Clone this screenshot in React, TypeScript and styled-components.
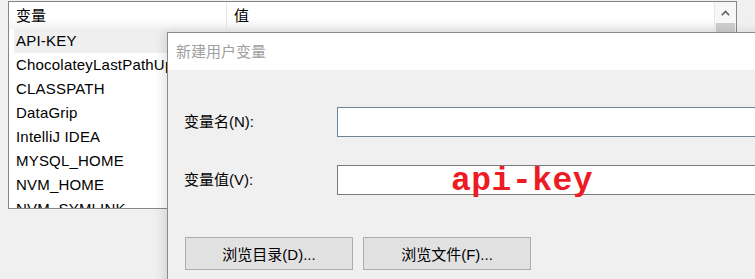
import styled, { createGlobalStyle } from "styled-components";

// Page reset and base font
const GlobalStyle = createGlobalStyle`
  html, body {
    margin: 0;
    padding: 0;
    background: #f0f0f0;
    overflow: hidden;
  }
  body {
    font-family: "Liberation Sans", "Noto Sans CJK SC", sans-serif;
    font-size: 15px;
    color: #000;
  }
`;

const Screen = styled.div`
  position: relative;
  width: 755px;
  height: 279px;
  padding: 1px 0 0 8px;
  box-sizing: border-box;
  overflow: hidden;
  background: #f0f0f0;
`;

// Environment variable list behind the dialog
const ListBox = styled.div`
  display: flex;
  width: 729px;
  height: 208px;
  box-sizing: border-box;
  border: 1px solid #828790;
  background: #fff;
  overflow: hidden;
`;

const ListMain = styled.div`
  flex: 1;
  display: flex;
  flex-direction: column;
  overflow: hidden;
`;

const Header = styled.div`
  display: flex;
  height: 27px;
  flex-shrink: 0;
  background: linear-gradient(#ffffff 0%, #ffffff 60%, #f2f2f2 100%);
`;

const HeaderCell = styled.div<{ $w?: number }>`
  width: ${(p) => (p.$w ? `${p.$w}px` : "auto")};
  flex: ${(p) => (p.$w ? "none" : "1")};
  padding-left: 7px;
  line-height: 27px;
  box-sizing: border-box;
  border-right: ${(p) => (p.$w ? "1px solid #e5e5e5" : "none")};
`;

const Row = styled.div<{ $selected?: boolean }>`
  height: 24px;
  line-height: 24px;
  margin-left: 5px;
  padding-left: 2px;
  flex-shrink: 0;
  white-space: nowrap;
  letter-spacing: 0.2px;
  background: ${(p) => (p.$selected ? "#efefef" : "transparent")};
`;

const ScrollBar = styled.div`
  width: 21px;
  display: flex;
  flex-direction: column;
  border-left: 1px solid #e8e8e8;
  background: #f0f0f0;
`;

const ArrowButton = styled.div`
  height: 21px;
  display: flex;
  align-items: center;
  justify-content: center;
  background: #f7f7f7;
`;

const Thumb = styled.div`
  flex: 1;
  margin: 0 1px;
  background: #cdcdcd;
`;

// "New user variable" dialog lying over the list
const Dialog = styled.div`
  position: absolute;
  left: 167px;
  top: 32px;
  width: 620px;
  height: 280px;
  box-sizing: border-box;
  border: 1px solid #8a8a8a;
  background: #f0f0f0;
  box-shadow: -3px 0 10px rgba(0, 0, 0, 0.12);
`;

const TitleBar = styled.div`
  height: 37px;
  padding-left: 8px;
  line-height: 37px;
  background: #fff;
  color: #a0a0a0;
`;

const Body = styled.div`
  padding: 37px 0 0 16px;
  display: flex;
  flex-direction: column;
`;

const FieldGrid = styled.div`
  display: grid;
  grid-template-columns: 153px 1fr;
  row-gap: 28px;
  align-items: center;
`;

const Label = styled.div`
  line-height: 30px;
`;

const TextBox = styled.div<{ $focused?: boolean }>`
  position: relative;
  height: 30px;
  box-sizing: border-box;
  border: 1px solid ${(p) => (p.$focused ? "#6d8399" : "#7a7a7a")};
  border-right: none;
  background: #fff;
  overflow: visible;
`;

const Annotation = styled.span`
  display: block;
  padding-left: 113px;
  height: 28px;
  line-height: 32px;
  font-family: "Liberation Mono", monospace;
  font-weight: bold;
  font-size: 33px;
  letter-spacing: 0.5px;
  color: #ed1c24;
  white-space: nowrap;
`;

const ButtonRow = styled.div`
  display: flex;
  gap: 10px;
  margin-top: 42px;
  padding-left: 1px;
`;

const Button = styled.div`
  width: 168px;
  height: 33px;
  box-sizing: border-box;
  border: 1px solid #adadad;
  background: #e1e1e1;
  display: flex;
  align-items: center;
  justify-content: center;
`;

const variables = [
  "API-KEY",
  "ChocolateyLastPathUpdate",
  "CLASSPATH",
  "DataGrip",
  "IntelliJ IDEA",
  "MYSQL_HOME",
  "NVM_HOME",
  "NVM_SYMLINK",
];

function App() {
  return (
    <Screen>
      <GlobalStyle />
      <ListBox>
        <ListMain>
          <Header>
            <HeaderCell $w={218}>变量</HeaderCell>
            <HeaderCell>值</HeaderCell>
          </Header>
          {variables.map((name, i) => (
            <Row key={name} $selected={i === 0}>
              {name}
            </Row>
          ))}
        </ListMain>
        <ScrollBar>
          <ArrowButton>
            <svg width="9" height="6" viewBox="0 0 9 6">
              <path d="M0.8 5.2 L4.5 1.5 L8.2 5.2" fill="none" stroke="#606060" strokeWidth="1.6" />
            </svg>
          </ArrowButton>
          <Thumb />
        </ScrollBar>
      </ListBox>

      <Dialog>
        <TitleBar>新建用户变量</TitleBar>
        <Body>
          <FieldGrid>
            <Label>变量名(N):</Label>
            <TextBox $focused />
            <Label>变量值(V):</Label>
            <TextBox>
              <Annotation>api-key</Annotation>
            </TextBox>
          </FieldGrid>
          <ButtonRow>
            <Button>浏览目录(D)...</Button>
            <Button>浏览文件(F)...</Button>
          </ButtonRow>
        </Body>
      </Dialog>
    </Screen>
  );
}

export default App;
